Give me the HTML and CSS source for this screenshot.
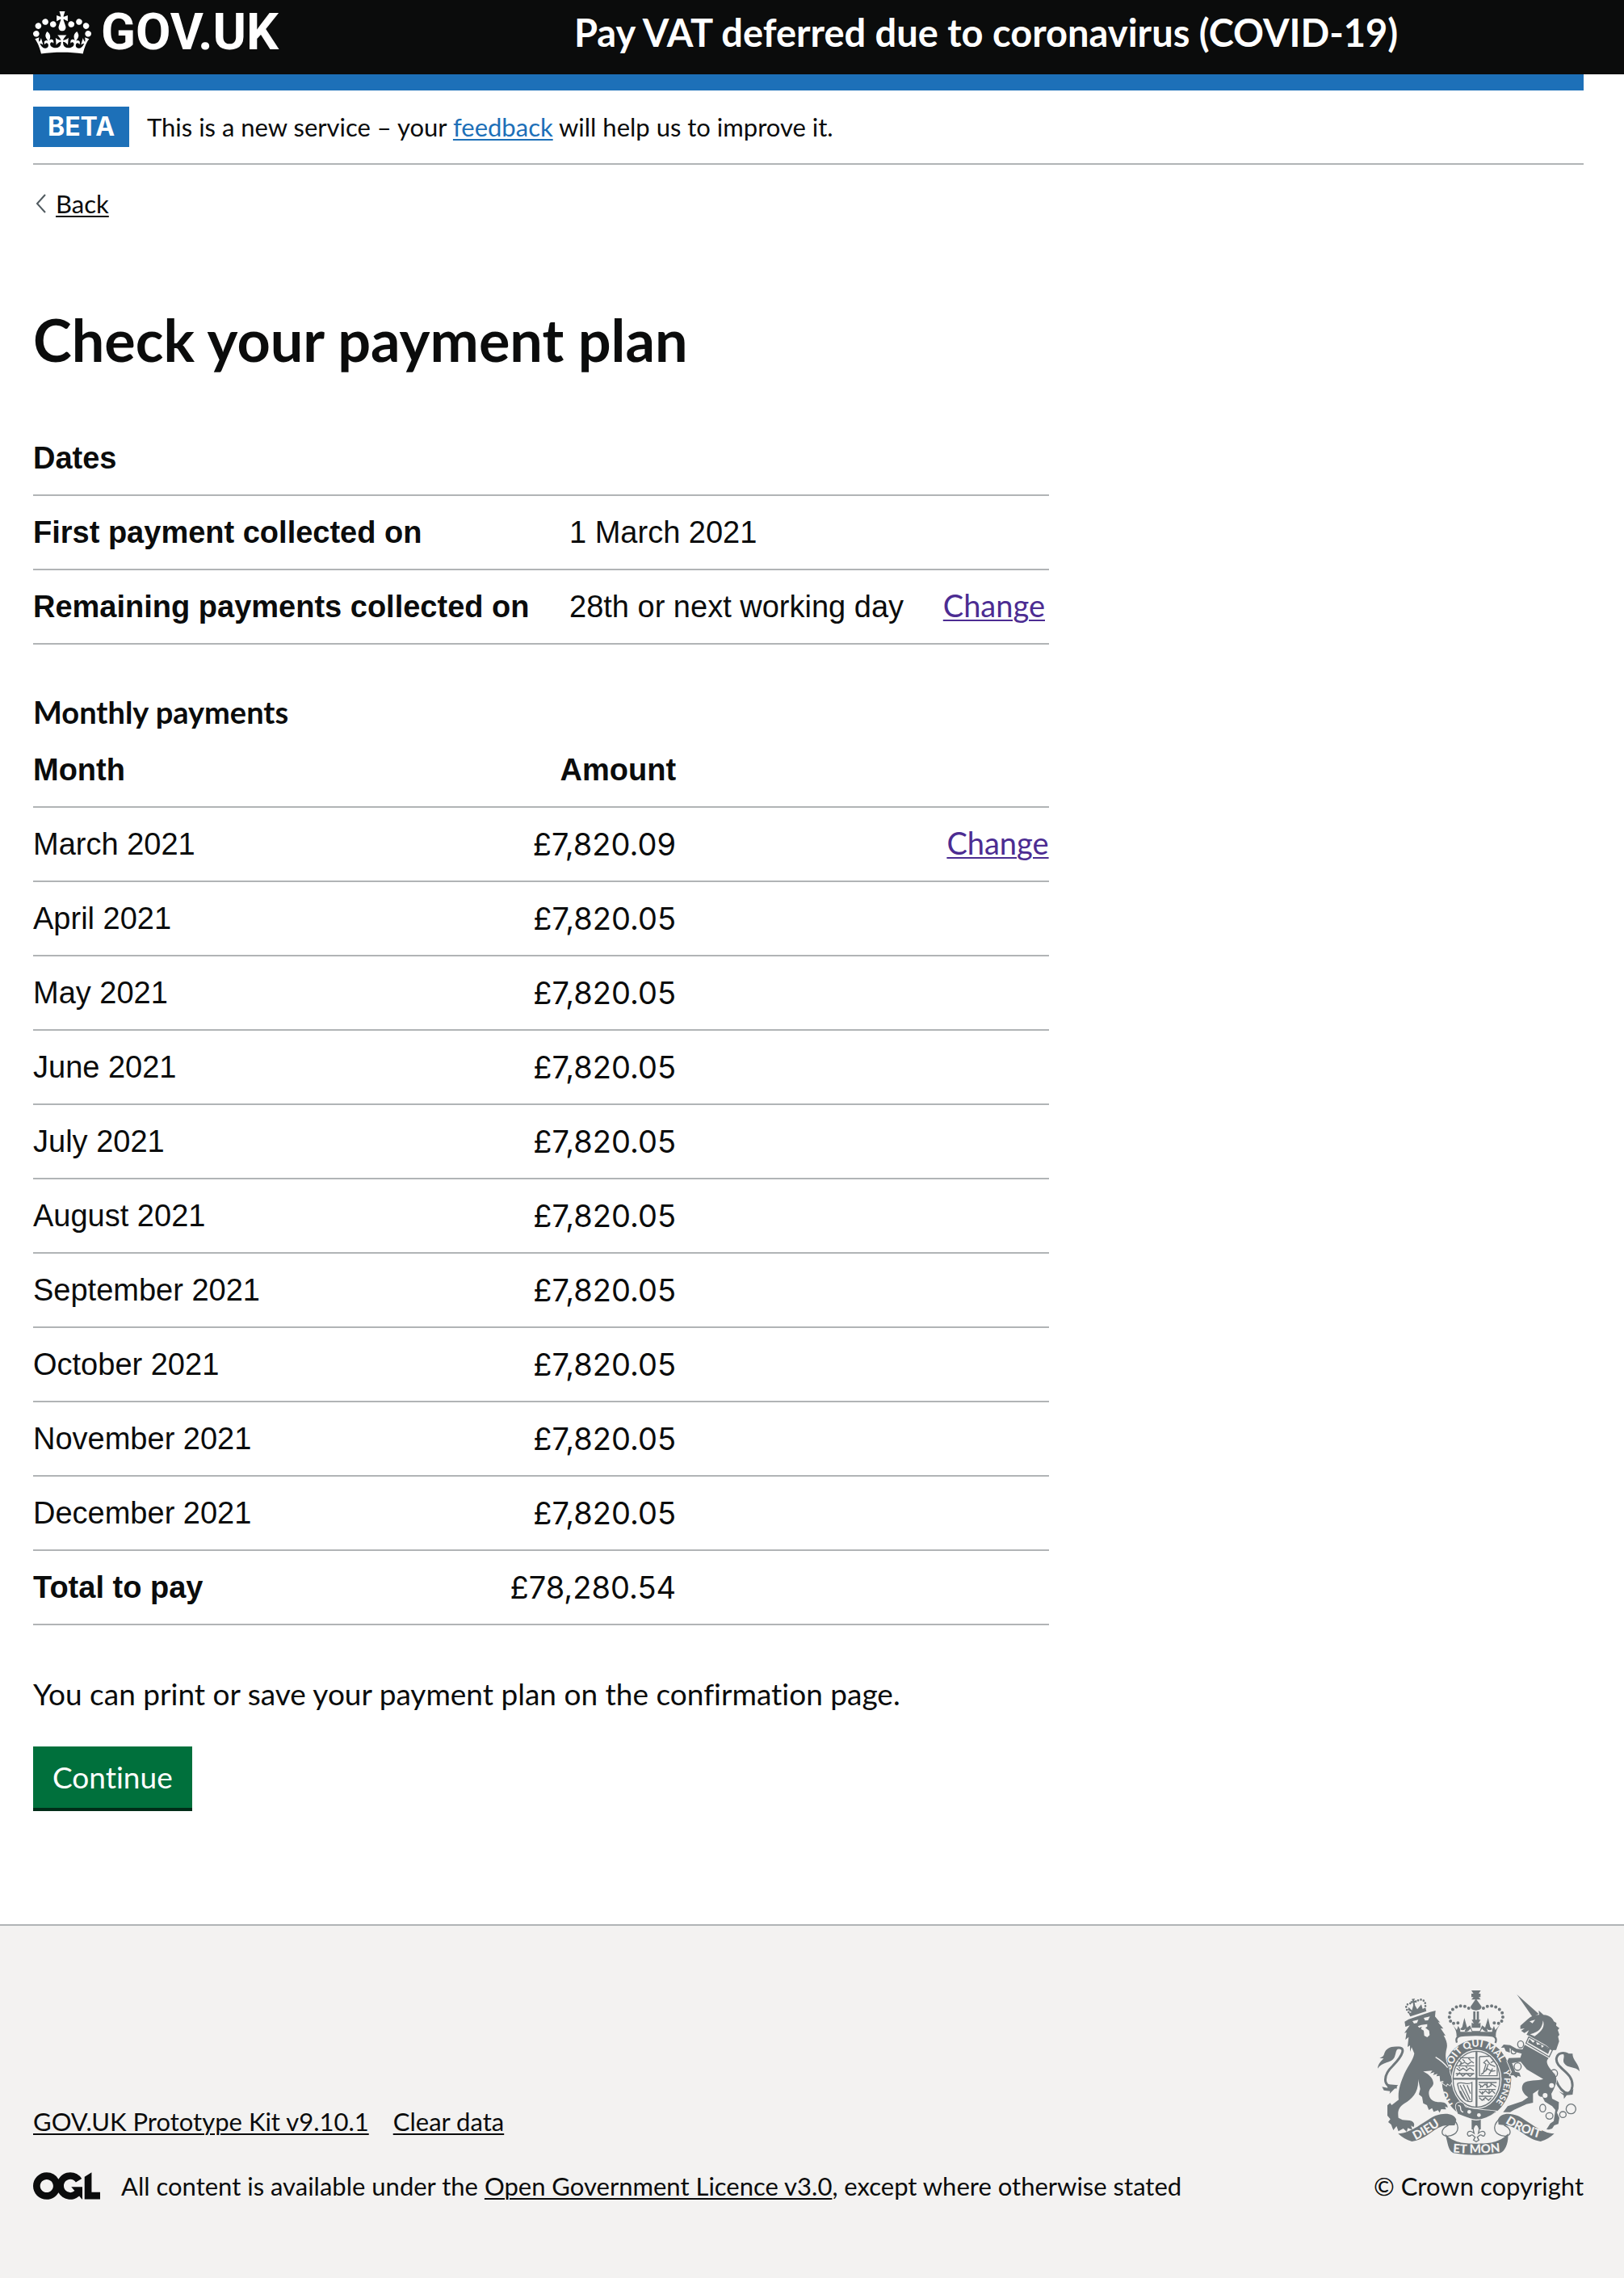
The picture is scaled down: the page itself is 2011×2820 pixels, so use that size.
FILE: index.html
```
<!DOCTYPE html>
<html lang="en">
<head>
<meta charset="utf-8">
<meta name="viewport" content="width=device-width, initial-scale=1">
<title>Check your payment plan - GOV.UK</title>
<link rel="stylesheet" href="styles.css">
</head>
<body>
<header class="header">
  <div class="header-inner">
    <a class="logo" href="#">
      <svg class="logo-crown" viewBox="0 0 132 97" aria-hidden="true">
        <path fill="currentColor" fill-rule="evenodd" d="M25 30.2c3.5 1.5 7.7-.2 9.1-3.7 1.5-3.6-.2-7.8-3.9-9.2-3.6-1.4-7.6.3-9.1 3.9-1.4 3.5.3 7.5 3.9 9zM9 39.5c3.6 1.5 7.8-.2 9.2-3.7 1.5-3.6-.2-7.8-3.9-9.1-3.6-1.5-7.6.2-9.1 3.8-1.4 3.5.3 7.5 3.8 9zM4.4 57.2c3.5 1.5 7.7-.2 9.1-3.8 1.5-3.6-.2-7.7-3.9-9.1-3.5-1.5-7.6.3-9.1 3.8-1.4 3.5.3 7.6 3.9 9.1zm38.3-21.4c3.5 1.5 7.7-.2 9.1-3.8 1.5-3.6-.2-7.7-3.9-9.1-3.6-1.5-7.6.3-9.1 3.8-1.3 3.6.4 7.7 3.9 9.1zm64.4-5.6c-3.6 1.5-7.8-.2-9.1-3.7-1.5-3.6.2-7.8 3.8-9.2 3.6-1.4 7.7.3 9.2 3.9 1.3 3.5-.4 7.5-3.9 9zm15.9 9.3c-3.6 1.5-7.7-.2-9.1-3.7-1.5-3.6.2-7.8 3.7-9.1 3.6-1.5 7.7.2 9.2 3.8 1.5 3.5-.3 7.5-3.8 9zm4.7 17.7c-3.6 1.5-7.8-.2-9.2-3.8-1.5-3.6.2-7.7 3.9-9.1 3.6-1.5 7.7.3 9.2 3.8 1.3 3.5-.4 7.6-3.9 9.1zM89.3 35.8c-3.6 1.5-7.8-.2-9.2-3.8-1.4-3.6.2-7.7 3.9-9.1 3.6-1.5 7.7.3 9.2 3.8 1.4 3.6-.3 7.7-3.9 9.1zM69.7 17.7l8.9 4.7V9.3l-8.9 2.8c-.2-.3-.5-.6-.9-.9L72.4 0H59.6l3.5 11.2c-.3.3-.6.5-.9.9l-8.8-2.8v13.1l8.8-4.7c.3.3.6.7.9.9l-5 15.4v.1c-.2.8-.4 1.6-.4 2.4 0 4.1 3.1 7.5 7 8.1h.2c.3 0 .7.1 1 .1.4 0 .7 0 1-.1h.2c4-.6 7.1-4.1 7.1-8.1 0-.8-.1-1.7-.4-2.4V34l-5.1-15.4c.4-.2.7-.6 1-.9zM66 92.8c16.9 0 32.8 1.1 47.1 3.2 4-16.9 8.9-26.7 14-33.5l-9.6-3.4c1 4.9 1.1 7.2 0 10.2-1.5-1.4-3-4.3-4.2-8.7L108.6 76c2.8-2 5-3.2 7.5-3.3-4.4 9.4-10 11.9-13.6 11.2-4.3-.8-6.3-4.6-5.6-7.9 1-4.7 5.7-5.9 8-.5 4.3-8.7-3-11.4-7.6-8.8 7.1-7.2 7.9-13.5 2.1-21.1-8 6.1-8.1 12.3-4.5 20.8-4.7-5.4-12.1-2.5-9.5 6.2 3.4-5.2 7.9-2 7.2 3.1-.6 4.3-6.4 7.8-13.5 7.2-10.3-.9-10.9-8-11.2-13.8 2.5-.5 7.1 1.8 11 7.3L80.2 60c-4.1 4.4-8 5.3-12.3 5.4 1.4-4.4 8-11.6 8-11.6H55.5s6.4 7.2 7.9 11.6c-4.2-.1-8-1-12.3-5.4l1.4 16.4c3.9-5.5 8.5-7.7 10.9-7.3-.3 5.8-.9 12.8-11.1 13.8-7.2.6-12.9-2.9-13.5-7.2-.7-5 3.8-8.3 7.1-3.1 2.7-8.7-4.6-11.6-9.4-6.2 3.7-8.5 3.6-14.7-4.6-20.8-5.8 7.6-5 13.9 2.2 21.1-4.7-2.6-11.9.1-7.7 8.8 2.3-5.5 7.1-4.2 8.1.5.7 3.3-1.3 7.1-5.7 7.9-3.5.7-9-1.8-13.5-11.2 2.5.1 4.7 1.3 7.5 3.3l-4.7-15.4c-1.2 4.4-2.7 7.2-4.3 8.7-1.1-3-.9-5.3 0-10.2l-9.5 3.4c5 6.9 9.9 16.7 14 33.5 14.8-2.1 30.8-3.2 47.7-3.2z"/>
      </svg>
      <span>GOV.UK</span>
    </a>
    <a class="service-name" href="#">Pay VAT deferred due to coronavirus (COVID-19)</a>
  </div>
</header>

<div class="container">
  <div class="phase-banner">
    <strong class="tag">BETA</strong>
    <span>This is a new service – your <a class="link" href="#">feedback</a> will help us to improve it.</span>
  </div>
  <a class="back" href="#">
    <svg class="back-arrow" viewBox="0 0 14 24" aria-hidden="true"><path d="M13 1 3 12l10 11"/></svg>
    <span>Back</span>
  </a>

  <main class="main">
    <h1 class="heading">Check your payment plan</h1>

    <table class="table">
      <colgroup><col class="col-label"><col class="col-value"><col></colgroup>
      <thead>
        <tr><th scope="col" colspan="3">Dates</th></tr>
      </thead>
      <tbody>
        <tr><th scope="row">First payment collected on</th><td>1 March 2021</td><td></td></tr>
        <tr><th scope="row">Remaining payments collected on</th><td>28th or next working day</td><td><a class="link visited" href="#">Change</a></td></tr>
      </tbody>
    </table>

    <table class="table">
      <caption>Monthly payments</caption>
      <colgroup><col class="col-month"><col class="col-amount"><col></colgroup>
      <thead>
        <tr><th scope="col">Month</th><th scope="col" class="right">Amount</th><td></td></tr>
      </thead>
      <tbody>
        <tr><td>March 2021</td><td class="amount">£7,820.09</td><td class="right"><a class="link visited" href="#">Change</a></td></tr>
        <tr><td>April 2021</td><td class="amount">£7,820.05</td><td></td></tr>
        <tr><td>May 2021</td><td class="amount">£7,820.05</td><td></td></tr>
        <tr><td>June 2021</td><td class="amount">£7,820.05</td><td></td></tr>
        <tr><td>July 2021</td><td class="amount">£7,820.05</td><td></td></tr>
        <tr><td>August 2021</td><td class="amount">£7,820.05</td><td></td></tr>
        <tr><td>September 2021</td><td class="amount">£7,820.05</td><td></td></tr>
        <tr><td>October 2021</td><td class="amount">£7,820.05</td><td></td></tr>
        <tr><td>November 2021</td><td class="amount">£7,820.05</td><td></td></tr>
        <tr><td>December 2021</td><td class="amount">£7,820.05</td><td></td></tr>
        <tr><th scope="row">Total to pay</th><td class="amount">£78,280.54</td><td></td></tr>
      </tbody>
    </table>

    <p class="body-text">You can print or save your payment plan on the confirmation page.</p>
    <button class="button" type="submit">Continue</button>
  </main>
</div>

<footer class="footer">
  <div class="footer-meta">
    <ul class="footer-links">
      <li><a href="#">GOV.UK Prototype Kit v9.10.1</a></li>
      <li><a href="#">Clear data</a></li>
    </ul>
    <div class="licence">
      <svg class="ogl" viewBox="0 0 483 196" role="img" aria-label="Open Government Licence"><path fill="currentColor" d="M421.500 142.800V.1l-50.700 32.300v161.100h112.400v-50.700zm-122.300-9.600A47.120 47.120 0 0 1 221 97.800c0-26 21.100-47.100 47.100-47.100 16.700 0 31.400 8.700 39.700 21.800l42.700-27.200A97.630 97.630 0 0 0 268.100 0c-36.500 0-68.300 20.100-85.100 49.700A98 98 0 0 0 97.800 0C43.900 0 0 43.900 0 97.800s43.900 97.800 97.800 97.800c36.500 0 68.300-20.100 85.100-49.700a97.760 97.760 0 0 0 149.600 25.400l19.400 22.200h3v-87.800h-80l24.300 27.500zM97.800 145c-26 0-47.100-21.100-47.100-47.100s21.100-47.100 47.100-47.100 47.100 21.100 47.100 47.100S123.800 145 97.800 145"/></svg>
      <span>All content is available under the <a href="#">Open Government Licence v3.0</a>, except where otherwise stated</span>
    </div>
  </div>
  <a class="copyright" href="#">
    <svg class="crest" viewBox="75 72 750 612" aria-hidden="true">
      <defs>
        <path id="garter-ho" d="M373 512A119 137 0 0 1 325 410"/>
        <path id="garter-top" d="M344 383A103 121 0 0 1 442 281A103 121 0 0 1 545 402"/>
        <path id="garter-right" d="M540 365A103 121 0 0 1 498 503"/>
        <path id="dieu" d="M215 628Q268 602 328 558"/>
        <path id="droit" d="M549 564Q605 602 690 624"/>
        <path id="mon" d="M350 673Q440 682 540 669"/>
      </defs>
      <!-- tails -->
      <g class="line thick">
        <path d="M146 432C85 432 98 383 132 351C168 314 184 279 145 286"/>
        <path d="M728 380C750 455 792 475 798 428C803 374 735 363 739 325C742 304 765 299 782 310"/>
      </g>
      <g class="ink">
        <path d="M158 282C126 276 106 287 100 305C98 315 92 320 82 323L97 325C88 335 76 345 75 362C90 337 127 342 137 321C145 301 140 294 158 282Z"/>
        <path d="M91 430L112 434L108 420L151 424L119 456L121 446L98 443Z"/>
        <path d="M764 306L799 307C798 330 824 346 825 373C811 353 780 363 768 343C760 329 772 320 764 306Z"/>
        <path d="M748 447L765 455L763 440C779 452 788 456 802 438L799 459L777 461L767 475L766 462Z"/>
      </g>
      <!-- garter ring and its buckle strap -->
      <ellipse class="ink" cx="442" cy="402" rx="129" ry="147"/>
      <ellipse class="paper" cx="442" cy="402" rx="93" ry="110"/>
      <ellipse class="line" cx="442" cy="402" rx="87" ry="104"/>
      <g class="line">
        <path d="M442 298V506M355 400H529" stroke-width="7"/>
        <path d="M453 318V389H519V350L492 316L453 318M459 384L484 363M466 382L477 346L469 340L480 330L493 347L512 355M478 360L498 372L512 370M486 345L476 372M495 340L506 335M502 362L488 385"/>
        <path d="M371 418C382 470 401 490 425 484V414C405 427 390 407 371 418M381 424L412 483M393 422L419 479M407 424L420 455M382 445L400 480"/>
      </g>
      <g class="line thin">
        <path d="M380 322H434M374 330L386 340L381 348L398 339L410 346L424 336L432 342M390 328L399 336M412 324L421 333M365 352H434M368 361L379 370L392 361L405 370L418 360L432 370M376 356L381 362M402 354L408 361M365 381H434M368 389L379 378L391 390L404 380L418 391L431 380"/>
        <path d="M450 414H517M451 420L463 430L474 420L487 431L500 420L515 430M451 440H513M452 446L463 456L475 445L488 455L500 444L511 455M450 465H503M452 470L463 480L475 470L487 480L497 470M457 425V434M481 416V436M496 413V428M464 447V460M489 441V457M470 473V481"/>
      </g>
      <g class="motto">
        <text><textPath href="#garter-ho" startOffset="24">HO</textPath></text>
        <text><textPath href="#garter-top" startOffset="15">SOIT QUI MAL</textPath></text>
        <text class="motto-small"><textPath href="#garter-right" startOffset="4">Y PENSE</textPath></text>
      </g>
      <path class="ink outlined" d="M366 510C361 490 379 481 393 492L400 505C440 516 480 516 515 521C490 541 466 551 440 551C414 548 391 535 373 530Z"/>
      <circle class="paper" cx="415" cy="523" r="7"/><circle class="paper" cx="451" cy="535" r="7"/>
      <path class="line light" d="M374 500Q383 498 383 510T393 524"/>
      <!-- central crown -->
      <path class="ink" d="M423 72H458L450 84H457V97H450L458 106H423L431 97H423V84H431ZM440 103L461 132H420ZM420 132H461Q460 146 440 146T420 132ZM430 150H438V181H430ZM443 150H451V181H443ZM424 181H457L449 195L457 192V211H424V192L432 195Z"/>
      <path class="beads" d="M373 193L352 195C337 181 337 151 355 142C377 123 403 128 419 142"/>
      <path class="beads" d="M508 193L529 195C544 181 544 151 526 142C504 123 478 128 462 142"/>
      <path class="ink" d="M350 196L369 219L374 204L381 216L389 208L397 174L407 210L418 202L427 223H454L463 202L474 210L485 174L493 208L501 216L507 204L512 219L532 196C519 213 513 224 514 243Q441 226 368 243C368 223 362 211 350 196Z"/>
      <path class="paper" d="M381 215Q392 225 402 214L398 224Q410 229 419 214L425 226H382ZM501 215Q490 225 480 214L484 224Q472 229 463 214L456 226H500Z"/>
      <path class="line cap" d="M369 266C361 244 378 240 400 239Q440 235 482 239C507 240 521 245 512 267"/>
      <!-- lion crown -->
      <path class="ink" d="M190 157L252 137L256 149L196 169ZM201 104L213 102L210 111L220 108V117L212 117L214 128L222 142L237 124L242 140L229 148L201 153L187 144L190 134L202 146L207 128L206 118L198 120L197 112L205 112Z"/>
      <path class="beads beads-small" d="M190 153L181 140C178 122 195 117 204 122"/>
      <path class="beads beads-small" d="M250 141L253 126C250 107 237 101 222 111"/>
      <!-- lion -->
      <path class="ink outlined" d="M175 188L190 179L270 152L290 147L288 169L307 191L299 190L319 214L309 213L327 240L320 239C332 259 335 274 331 289C327 305 325 322 333 344C345 363 340 378 348 391L351 411L344 425L333 418L330 426L318 418L319 408L307 410L305 389L293 391L297 382L281 386L286 376L270 380L278 370L244 373C270 386 281 401 282 417C280 433 265 434 265 453C266 477 280 486 306 487C324 486 335 495 335 507L325 503L329 514L311 513L305 526L299 517L283 523L277 509L265 516L258 498L244 491L240 468L228 458L233 438L225 401C229 447 204 476 175 491C151 506 149 522 152 545L167 553L194 555C210 558 214 569 208 580L199 574L204 590L187 583L183 597L170 585L152 595L145 576L133 591L125 570L114 561L122 550L111 537L111 499L121 490L127 498L153 478C149 449 159 417 174 382C188 352 207 330 211 306L201 283L195 300L195 276L186 282L190 245L178 255L182 228L174 230L194 202L178 207Z"/>
      <path class="paper" d="M204 186L226 181L221 193L210 195ZM246 174L269 169L262 183L251 184ZM224 205L237 200L259 197V206L252 211L266 221L268 238L259 246L248 240L246 221L236 215L239 207L229 211Z"/>
      <path class="line light" d="M290 320Q318 336 335 359"/>
      <!-- unicorn -->
      <path class="ink" d="M592 87L673 159L650 170Z"/>
      <path class="ink" d="M605 203L631 180C646 166 660 162 675 163L673 146L691 163C716 164 726 178 729 187L739 193L738 203L750 212L744 219L750 237L745 243L749 261L738 293L723 294L700 275L642 243L628 236L637 220L620 230L608 222L621 213L605 215Z"/>
      <path class="paper" d="M639 187L660 181L650 194ZM689 184C697 205 687 223 658 242L641 235C677 226 686 211 689 184Z"/>
      <path class="line" d="M636 245L724 294L712 319L626 268Z"/>
      <path class="ink" d="M633 265L639 252L652 266L662 257L667 274L682 272L684 285L698 275L705 286L716 288L708 308Z"/>
      <path class="ink outlined" d="M621 274L710 323C693 340 713 360 734 385C746 406 732 435 720 456L723 474L748 487L747 511L741 526L750 545L746 568L731 573L723 585L711 589L702 588L716 566L729 557L735 516L723 502L696 485L687 467C675 469 664 460 674 440L652 455L652 489L628 494L582 515L567 524L541 524L558 502L612 484L634 469C610 452 606 433 617 417C632 402 670 409 690 401L629 365L606 337L574 342L586 374L601 377L607 393L595 389L591 397L579 387L566 388L573 374L556 335L562 323L605 322L610 307L582 299L565 286L566 303L551 298L545 284L533 285L543 273L567 275L591 289L613 291Z"/>
      <g class="line chain">
        <ellipse cx="606" cy="272" rx="11" ry="13"/><ellipse cx="580" cy="298" rx="9" ry="10"/>
        <ellipse cx="595" cy="355" rx="13" ry="14"/><ellipse cx="730" cy="380" rx="13" ry="14"/>
        <ellipse cx="688" cy="509" rx="11" ry="14"/><ellipse cx="713" cy="538" rx="13" ry="12"/>
        <ellipse cx="763" cy="533" rx="12" ry="11"/><circle cx="793" cy="512" r="18"/>
      </g>
      <circle class="paper" cx="721" cy="425" r="9"/><circle class="paper" cx="697" cy="462" r="9"/>
      <!-- fleur-de-lis -->
      <path class="ink" d="M424 552Q442 558 458 552V588H424Z"/>
      <path class="line paper-fill" d="M441 568C424 582 431 594 433 602C414 586 403 602 411 611C418 618 421 606 427 609L437 617L431 628L441 634L451 628L445 617L455 609C463 606 464 618 471 611C479 602 469 586 449 602C451 594 458 582 441 568Z"/>
      <!-- ribbon -->
      <path class="line" d="M355 549C389 583 370 609 335 613C310 612 309 595 325 580L338 572M527 549C493 583 512 609 547 613C570 612 573 595 557 580L544 572"/>
      <path class="ink" d="M151 604C200 603 247 558 288 538C322 524 359 528 367 552L361 573L326 574C286 579 256 626 202 633C182 627 164 617 151 604ZM731 604C682 603 635 558 596 538C562 524 531 528 522 552L524 570L556 574C600 581 630 626 680 633C700 627 718 617 731 604Z"/>
      <path class="ink" d="M325 604C357 643 411 641 441 641S525 643 559 604C562 638 548 669 530 676Q440 691 356 676C335 666 337 640 325 604Z"/>
      <g class="motto motto-large">
        <text><textPath href="#dieu">DIEU</textPath></text>
        <text><textPath href="#droit">DROIT</textPath></text>
        <text><textPath href="#mon" startOffset="4">ET MON</textPath></text>
      </g>
    </svg>
    <span>© Crown copyright</span>
  </a>
</footer>
</body>
</html>
```
FILE: styles.css
```
* { box-sizing: border-box; }

body {
  margin: 0;
  min-height: 100vh;
  display: flex;
  flex-direction: column;
  background: #fff;
  color: #0b0c0c;
  font-family: Lato, Roboto, sans-serif;
  font-size: 31px;
  font-variant-ligatures: none;
  line-height: 40px;
}

a {
  color: inherit;
  text-decoration-thickness: 2px;
  text-underline-offset: 3px;
}

.link { color: #1d70b8; }
.link.visited { color: #4c2c92; }

/* Header */
.header {
  background: #0b0c0c;
  color: #fff;
  padding: 10px 50px 22px 41px;
}
.header-inner {
  display: grid;
  grid-template-columns: 67fr 125fr;
  line-height: 60px;
}
.header a { text-decoration: none; font-weight: 700; }
.logo {
  display: flex;
  align-items: center;
  gap: 12px;
  font-family: Roboto, sans-serif;
  font-size: 63px;
}
.logo-crown { width: 72px; height: 53px; }
.service-name { font-size: 47px; }

.container { padding: 0 50px 0 41px; }

/* Phase banner */
.phase-banner {
  display: flex;
  align-items: center;
  gap: 22px;
  padding: 20px 0;
  border-top: 20px solid #1d70b8;
  border-bottom: 2px solid #b1b4b6;
  line-height: 50px;
}
.tag {
  padding: 0 18px;
  background: #1d70b8;
  color: #fff;
  font-family: Inter, sans-serif;
  font-size: 32px;
  font-weight: 700;
}

.back {
  display: inline-flex;
  align-items: center;
  gap: 12px;
  margin-top: 28px;
  padding-left: 2px;
  text-decoration: none;
}
.back span { text-decoration: underline 2px; }
.back-arrow {
  width: 14px;
  height: 24px;
  fill: none;
  stroke: #505a5f;
  stroke-width: 2;
}

/* Content */
.main {
  width: 65.5%;
  padding: 108px 0 144px;
}
.heading {
  margin: 0 0 62px;
  font-size: 72px;
  line-height: 80px;
}

.table {
  width: 100%;
  margin-bottom: 60px;
  border-collapse: separate;
  border-spacing: 0;
  table-layout: fixed;
  font-family: "Liberation Sans", Arial, sans-serif;
  font-size: 38px;
  line-height: 50px;
}
.table caption {
  padding-bottom: 4px;
  font-family: Lato, sans-serif;
  font-weight: 700;
  line-height: 46px;
  text-align: left;
}
.table th,
.table td {
  height: 92px;
  padding: 20px 0;
  border-bottom: 2px solid #b1b4b6;
  text-align: left;
  white-space: nowrap;
}
.table .right { text-align: right; }
.table .amount {
  font-family: Inter, sans-serif;
  text-align: right;
}
.table .link {
  font-family: Lato, sans-serif;
  line-height: 40px;
}
.col-label { width: 52.8%; }
.col-value { width: 36.8%; }
.col-month { width: 40%; }
.col-amount { width: 23.3%; }

.body-text {
  margin: 0 0 40px;
  font-size: 37px;
  line-height: 50px;
}
.button {
  display: block;
  padding: 13px 24px;
  border: 0;
  background: #00703c;
  box-shadow: 0 4px 0 #002d18;
  color: #fff;
  font-family: inherit;
  font-size: 37px;
  font-variant-ligatures: none;
  line-height: 50px;
}

/* Footer */
.footer {
  flex: 1;
  display: flex;
  justify-content: space-between;
  align-items: flex-end;
  padding: 80px 50px 94px 41px;
  border-top: 2px solid #b1b4b6;
  background: #f3f2f1;
}
.footer-meta {
  display: flex;
  flex-direction: column;
  gap: 40px;
}
.footer-links {
  display: flex;
  gap: 30px;
  margin: 0;
  padding: 0;
  list-style: none;
}
.licence {
  display: flex;
  align-items: center;
  gap: 26px;
}
.ogl { width: 83px; height: 34px; }
.copyright {
  display: flex;
  flex-direction: column;
  align-items: center;
  gap: 18px;
  text-decoration: none;
}
.crest { width: 250px; height: 204px; }

.ink { fill: #6f777b; }
.paper { fill: #f3f2f1; }
.outlined { stroke: #f3f2f1; stroke-width: 5; paint-order: stroke; }
.line { fill: none; stroke: #6f777b; stroke-width: 4; }
.line.thick { stroke-width: 9; }
.line.cap { stroke-width: 7; }
.line.light { stroke: #f3f2f1; }
.line.paper-fill { fill: #f3f2f1; }
.beads {
  fill: none;
  stroke: #6f777b;
  stroke-width: 12;
  stroke-linecap: round;
  stroke-dasharray: 0 16;
}
.beads-small { stroke-width: 8; stroke-dasharray: 0 11; }
.motto {
  fill: #f3f2f1;
  font-family: Lato, sans-serif;
  font-size: 37px;
  font-weight: 900;
}
.motto-small { font-size: 32px; }
.motto-large { font-size: 45px; }
```
